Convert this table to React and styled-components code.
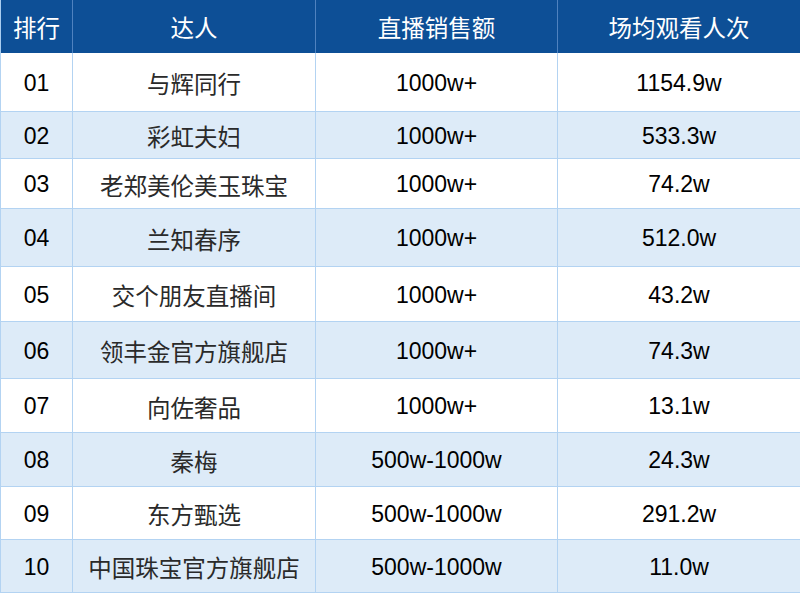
import React from 'react';
import styled, { createGlobalStyle } from 'styled-components';

const rows = [
  { rank: '01', name: '与辉同行', sales: '1000w+', views: '1154.9w', h: 58 },
  { rank: '02', name: '彩虹夫妇', sales: '1000w+', views: '533.3w', h: 47 },
  { rank: '03', name: '老郑美伦美玉珠宝', sales: '1000w+', views: '74.2w', h: 50 },
  { rank: '04', name: '兰知春序', sales: '1000w+', views: '512.0w', h: 58 },
  { rank: '05', name: '交个朋友直播间', sales: '1000w+', views: '43.2w', h: 55 },
  { rank: '06', name: '领丰金官方旗舰店', sales: '1000w+', views: '74.3w', h: 57 },
  { rank: '07', name: '向佐奢品', sales: '1000w+', views: '13.1w', h: 54 },
  { rank: '08', name: '秦梅', sales: '500w-1000w', views: '24.3w', h: 54 },
  { rank: '09', name: '东方甄选', sales: '500w-1000w', views: '291.2w', h: 53 },
  { rank: '10', name: '中国珠宝官方旗舰店', sales: '500w-1000w', views: '11.0w', h: 53 },
];

const GlobalStyle = createGlobalStyle`
  body {
    margin: 0;
    background: #ffffff;
    font-family: "Liberation Sans", "Noto Sans CJK SC", sans-serif;
  }
`;

const Table = styled.table`
  width: 800px;
  border-collapse: collapse;
  table-layout: fixed;
  border-left: 1px solid #a9cdf0;
  border-right: 1px solid #a9b8c8;
  border-bottom: 1px solid #8fbdea;
`;

const HeadCell = styled.th`
  height: 53px;
  padding: 0;
  background: #0d4f96;
  color: #ffffff;
  font-family: "Noto Sans CJK SC", sans-serif;
  font-size: 23.5px;
  font-weight: 400;
  text-align: center;
  border-left: 1px solid #4f82bf;
  &:first-child {
    border-left: none;
  }
`;

const Row = styled.tr`
  height: ${(p) => p.$h}px;
  background: ${(p) => (p.$alt ? '#ddebf8' : '#ffffff')};
`;

const Cell = styled.td`
  padding: 3px 0 0;
  text-align: center;
  border: 1px solid #b3d3f2;
  border-top: none;
  font-size: ${(p) => (p.$cjk ? '23.5px' : '23px')};
  color: ${(p) => (p.$cjk ? '#2a2a2a' : '#000000')};
  font-family: ${(p) =>
    p.$cjk ? '"Noto Sans CJK SC", sans-serif' : '"Liberation Sans", sans-serif'};
`;

export default function App() {
  return (
    <>
      <GlobalStyle />
      <Table>
        <colgroup>
          <col style={{ width: 72 }} />
          <col style={{ width: 243 }} />
          <col style={{ width: 242 }} />
          <col style={{ width: 243 }} />
        </colgroup>
        <thead>
          <tr>
            <HeadCell>排行</HeadCell>
            <HeadCell>达人</HeadCell>
            <HeadCell>直播销售额</HeadCell>
            <HeadCell>场均观看人次</HeadCell>
          </tr>
        </thead>
        <tbody>
          {rows.map((r, i) => (
            <Row key={r.rank} $h={r.h} $alt={i % 2 === 1}>
              <Cell>{r.rank}</Cell>
              <Cell $cjk>{r.name}</Cell>
              <Cell>{r.sales}</Cell>
              <Cell>{r.views}</Cell>
            </Row>
          ))}
        </tbody>
      </Table>
    </>
  );
}
